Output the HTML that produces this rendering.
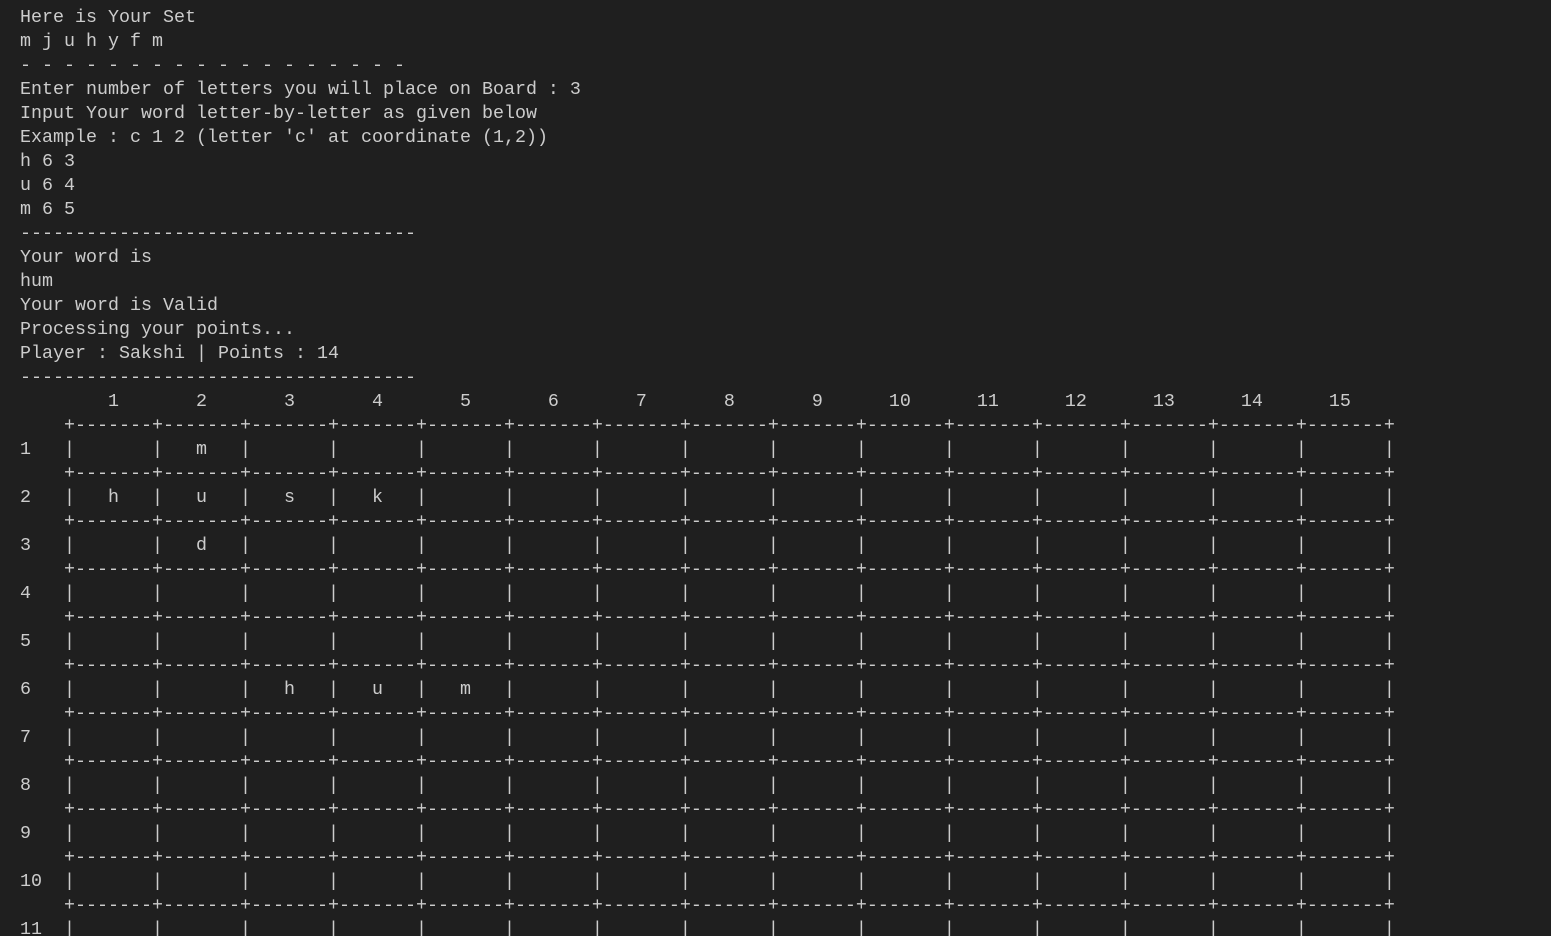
<!DOCTYPE html>
<html><head><meta charset="utf-8"><style>
html,body{margin:0;padding:0;background:#1f1f1f;width:1551px;height:936px;overflow:hidden}
pre{margin:0;padding:6px 0 0 20px;font-family:"Liberation Mono",monospace;font-size:18.33px;line-height:24px;color:#cccccc;white-space:pre}
</style></head><body><pre>Here is Your Set
m j u h y f m
- - - - - - - - - - - - - - - - - -
Enter number of letters you will place on Board : 3
Input Your word letter-by-letter as given below
Example : c 1 2 (letter 'c' at coordinate (1,2))
h 6 3
u 6 4
m 6 5
------------------------------------
Your word is
hum
Your word is Valid
Processing your points...
Player : Sakshi | Points : 14
------------------------------------
        1       2       3       4       5       6       7       8       9      10      11      12      13      14      15
    +-------+-------+-------+-------+-------+-------+-------+-------+-------+-------+-------+-------+-------+-------+-------+
1   |       |   m   |       |       |       |       |       |       |       |       |       |       |       |       |       |
    +-------+-------+-------+-------+-------+-------+-------+-------+-------+-------+-------+-------+-------+-------+-------+
2   |   h   |   u   |   s   |   k   |       |       |       |       |       |       |       |       |       |       |       |
    +-------+-------+-------+-------+-------+-------+-------+-------+-------+-------+-------+-------+-------+-------+-------+
3   |       |   d   |       |       |       |       |       |       |       |       |       |       |       |       |       |
    +-------+-------+-------+-------+-------+-------+-------+-------+-------+-------+-------+-------+-------+-------+-------+
4   |       |       |       |       |       |       |       |       |       |       |       |       |       |       |       |
    +-------+-------+-------+-------+-------+-------+-------+-------+-------+-------+-------+-------+-------+-------+-------+
5   |       |       |       |       |       |       |       |       |       |       |       |       |       |       |       |
    +-------+-------+-------+-------+-------+-------+-------+-------+-------+-------+-------+-------+-------+-------+-------+
6   |       |       |   h   |   u   |   m   |       |       |       |       |       |       |       |       |       |       |
    +-------+-------+-------+-------+-------+-------+-------+-------+-------+-------+-------+-------+-------+-------+-------+
7   |       |       |       |       |       |       |       |       |       |       |       |       |       |       |       |
    +-------+-------+-------+-------+-------+-------+-------+-------+-------+-------+-------+-------+-------+-------+-------+
8   |       |       |       |       |       |       |       |       |       |       |       |       |       |       |       |
    +-------+-------+-------+-------+-------+-------+-------+-------+-------+-------+-------+-------+-------+-------+-------+
9   |       |       |       |       |       |       |       |       |       |       |       |       |       |       |       |
    +-------+-------+-------+-------+-------+-------+-------+-------+-------+-------+-------+-------+-------+-------+-------+
10  |       |       |       |       |       |       |       |       |       |       |       |       |       |       |       |
    +-------+-------+-------+-------+-------+-------+-------+-------+-------+-------+-------+-------+-------+-------+-------+
11  |       |       |       |       |       |       |       |       |       |       |       |       |       |       |       |
</pre></body></html>
